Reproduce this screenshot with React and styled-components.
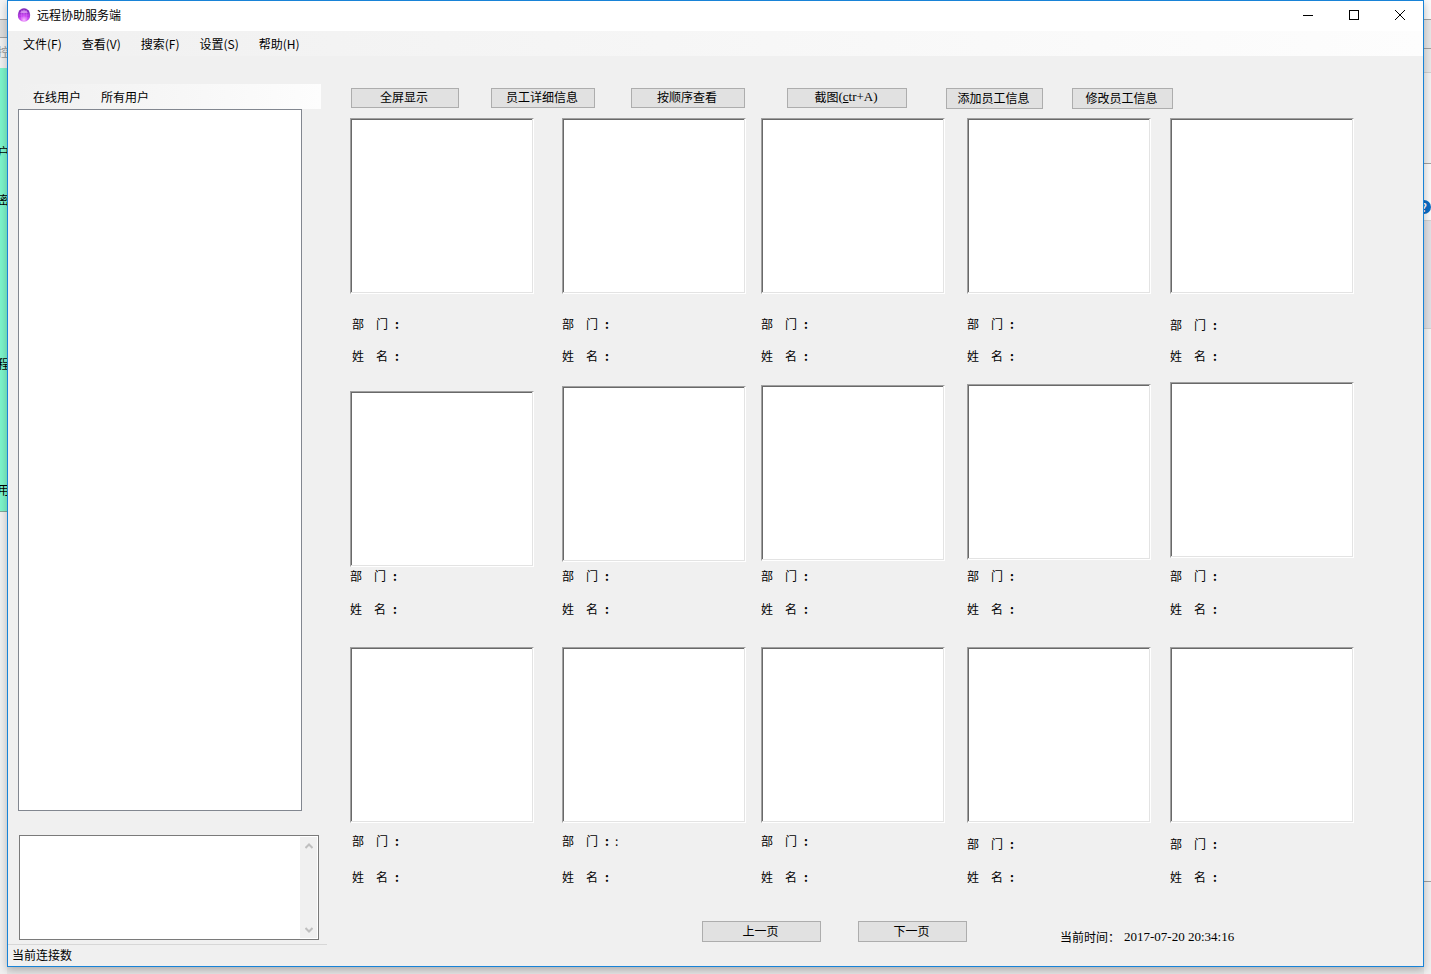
import React from "react";
import styled, { createGlobalStyle } from "styled-components";

const GlobalStyle = createGlobalStyle`
  * {
    box-sizing: border-box;
  }
  body {
    margin: 0;
    font-family: "Noto Sans CJK SC", sans-serif;
    font-size: 12px;
    line-height: 16px;
    color: #000;
  }
  button {
    font: inherit;
    color: inherit;
    padding: 0;
  }
`;

const Desktop = styled.div`
  display: flex;
  min-height: 100vh;
  background: #e6e6e6;
`;

const Strip = styled.div`
  flex: 0 0 7px;
  width: 7px;
  overflow: hidden;
  display: flex;
  flex-direction: column;
`;

const Slice = styled.div`
  height: ${({ height }) => height}px;
  flex: ${({ height }) => (height ? "none" : "1")};
  background: ${({ bg }) => bg};
  border-bottom: ${({ line }) => (line ? `1px solid ${line}` : "none")};
  color: ${({ color }) => color || "#000"};
  display: flex;
  align-items: flex-end;
  justify-content: center;
  white-space: nowrap;
`;

const HelpDot = styled.span`
  flex: none;
  width: 14px;
  height: 14px;
  margin-right: 7px;
  margin-bottom: 6px;
  border-radius: 50%;
  background: #0a6cc4;
  color: #fff;
  font-size: 11px;
  font-weight: 700;
  line-height: 14px;
  text-align: center;
`;

const Window = styled.div`
  position: relative;
  flex: 1;
  min-width: 0;
  margin-bottom: 7px;
  display: flex;
  flex-direction: column;
  background: #f0f0f0;
  border: 1px solid #1883d7;
  box-shadow: 0 3px 8px rgba(0, 0, 0, 0.25);
`;

const TitleBar = styled.header`
  height: 30px;
  display: flex;
  align-items: center;
  background: #fff;
  padding-left: 9px;
  padding-bottom: 2px;
`;

const Title = styled.h1`
  flex: 1;
  margin: 0 0 0 6px;
  font-size: 12px;
  font-weight: 400;
`;

const WindowButton = styled.button`
  width: 46px;
  height: 28px;
  border: none;
  background: none;
  display: flex;
  align-items: center;
  justify-content: center;
`;

const MenuBar = styled.nav`
  height: 25px;
  display: flex;
  align-items: center;
  gap: 20px;
  padding-left: 15px;
  background: linear-gradient(to right, #f0f0f0, #fdfdfd);
`;

const FlatButton = styled.button`
  border: none;
  background: none;
`;

const Body = styled.div`
  flex: 1;
  display: flex;
`;

const Side = styled.aside`
  flex: none;
  width: 319px;
  display: flex;
  flex-direction: column;
  padding-top: 28px;
`;

const Tabs = styled.div`
  height: 25px;
  margin: 0 6px 0 10px;
  padding-left: 15px;
  display: flex;
  align-items: center;
  gap: 20px;
  background: linear-gradient(to right, #f0f0f0, #fdfdfd);
`;

const UserList = styled.ul`
  flex: 1;
  margin: 0 25px 0 10px;
  padding: 0;
  list-style: none;
  background: #fff;
  border: 1px solid #828790;
`;

const LogBox = styled.div`
  height: 105px;
  margin: 24px 8px 4px 11px;
  padding: 1px;
  display: flex;
  background: #fff;
  border: 1px solid #7a7a7a;
`;

const LogText = styled.textarea`
  flex: 1;
  border: none;
  outline: none;
  resize: none;
  overflow: hidden;
  font: inherit;
`;

const ScrollBar = styled.div`
  width: 17px;
  display: flex;
  flex-direction: column;
  justify-content: space-between;
  background: #f0f0f0;
`;

const ScrollButton = styled.button`
  height: 17px;
  border: none;
  background: none;
  display: flex;
  align-items: center;
  justify-content: center;
`;

const StatusBar = styled.footer`
  height: 22px;
  padding: 2px 4px;
  border-top: 1px solid #d7d7d7;
`;

const Main = styled.main`
  flex: 1;
  min-width: 0;
  padding: 32px 69px 21px 23px;
`;

const Toolbar = styled.div`
  display: flex;
  height: 20px;
  margin-bottom: 10px;
  padding-left: 1px;
`;

const PushButton = styled.button`
  width: ${({ width }) => width}px;
  height: ${({ tall }) => (tall ? 21 : 20)}px;
  margin-right: ${({ after }) => after || 0}px;
  padding: 0 2px 2px 0;
  border: 1px solid #adadad;
  background: #e1e1e1;
  display: flex;
  align-items: center;
  justify-content: center;
`;

const Latin = styled.span`
  font-family: "Liberation Serif", serif;
  font-size: 13px;
`;

const Screens = styled.div`
  display: flex;
`;

const Column = styled.div`
  flex: 1;
  min-width: 0;
  margin-right: ${({ after }) => after}px;
`;

const Cell = styled.section`
  margin-top: ${({ above }) => above}px;
`;

const Screen = styled.div`
  height: 176px;
  background: #fff;
  border: 1px solid;
  border-color: #a0a0a0 #fff #fff #a0a0a0;
  box-shadow: inset -1px -1px 0 #e3e3e3, inset 1px 1px 0 #696969;
`;

const Field = styled.p`
  margin: ${({ above }) => above}px 0 0;
  padding-left: ${({ indent }) => indent || 0}px;
  white-space: pre;
`;

const Colon = styled.b`
  margin-left: 7px;
`;

const Pager = styled.div`
  display: flex;
  align-items: flex-start;
  margin-top: 36px;
  padding-left: 352px;
`;

const Clock = styled.p`
  margin: 8px 0 0 93px;
  display: flex;
  gap: 4px;
  white-space: nowrap;
`;

const menus = ["文件(F)", "查看(V)", "搜索(F)", "设置(S)", "帮助(H)"];

const tools = [
  { label: "全屏显示", width: 108, after: 32 },
  { label: "员工详细信息", width: 104, after: 36 },
  { label: "按顺序查看", width: 114, after: 42 },
  {
    label: (
      <>
        截图
        <Latin>
          (<u>c</u>tr+A)
        </Latin>
      </>
    ),
    width: 120,
    after: 39,
  },
  { label: "添加员工信息", width: 97, after: 29, tall: true },
  { label: "修改员工信息", width: 101, tall: true },
];

// above: space over the screen, dept / name: space over each label
const columns = [
  {
    after: 28,
    cells: [
      { above: 0, dept: 22, name: 16, indent: 2 },
      { above: 27, dept: 1, name: 17 },
      { above: 30, dept: 10, name: 20, indent: 2 },
    ],
  },
  {
    after: 15,
    cells: [
      { above: 0, dept: 22, name: 16 },
      { above: 22, dept: 6, name: 17 },
      { above: 30, dept: 10, name: 20, extra: "\u2002:" },
    ],
  },
  {
    after: 22,
    cells: [
      { above: 0, dept: 22, name: 16 },
      { above: 21, dept: 7, name: 17 },
      { above: 30, dept: 10, name: 20 },
    ],
  },
  {
    after: 19,
    cells: [
      { above: 0, dept: 22, name: 16 },
      { above: 20, dept: 8, name: 17 },
      { above: 30, dept: 13, name: 17 },
    ],
  },
  {
    after: 0,
    cells: [
      { above: 0, dept: 23, name: 15 },
      { above: 18, dept: 10, name: 17 },
      { above: 30, dept: 13, name: 17 },
    ],
  },
];

function AppIcon() {
  return (
    <svg width="14" height="14" viewBox="0 0 14 14">
      <defs>
        <radialGradient id="ball" cx="50%" cy="85%" r="80%">
          <stop offset="0" stopColor="#fbc4ff" />
          <stop offset="0.4" stopColor="#c63df0" />
          <stop offset="1" stopColor="#7a24b4" />
        </radialGradient>
      </defs>
      <ellipse cx="7" cy="7" rx="6.2" ry="6.8" fill="url(#ball)" />
      <path d="M3 4.5Q7 0 11 4.5Q7 6 3 4.5Z" fill="#e7b4f7" opacity="0.7" />
      <path
        d="M1 7H13M2 10H12M4.5 1.5V12.5M7 1V13M9.5 1.5V12.5"
        stroke="#e58cff"
        strokeWidth="0.5"
        opacity="0.6"
      />
    </svg>
  );
}

function App() {
  return (
    <>
      <GlobalStyle />
      <Desktop>
        <Strip aria-hidden="true">
          <Slice height={20} bg="#f4f4f4" line="#a0a0a0" />
          <Slice height={18} bg="#dcdcdc" line="#a0a0a0" />
          <Slice height={22} bg="#f0f0f0" color="#999">
            控
          </Slice>
          <Slice height={8} bg="#f0f0f0" />
          <Slice height={92} bg="#7cf4ca">户</Slice>
          <Slice height={48} bg="#7cf4ca">密</Slice>
          <Slice height={164} bg="#7cf4ca">程</Slice>
          <Slice height={126} bg="#7cf4ca">用</Slice>
          <Slice height={14} bg="#7cf4ca" line="#7fa898" />
          <Slice bg="#f0f0f0" />
        </Strip>
        <Window>
          <TitleBar>
            <AppIcon />
            <Title>远程协助服务端</Title>
            <WindowButton aria-label="最小化">
              <svg width="10" height="10" shapeRendering="crispEdges">
                <path d="M0 5.5H10" stroke="#000" />
              </svg>
            </WindowButton>
            <WindowButton aria-label="最大化">
              <svg width="10" height="10" shapeRendering="crispEdges">
                <rect x="0.5" y="0.5" width="9" height="9" fill="none" stroke="#000" />
              </svg>
            </WindowButton>
            <WindowButton aria-label="关闭">
              <svg width="10" height="10">
                <path d="M0 0L10 10M10 0L0 10" stroke="#000" />
              </svg>
            </WindowButton>
          </TitleBar>
          <MenuBar>
            {menus.map((menu) => (
              <FlatButton key={menu}>{menu}</FlatButton>
            ))}
          </MenuBar>
          <Body>
            <Side>
              <Tabs>
                <FlatButton>在线用户</FlatButton>
                <FlatButton>所有用户</FlatButton>
              </Tabs>
              <UserList />
              <LogBox>
                <LogText aria-label="日志" />
                <ScrollBar>
                  <ScrollButton aria-label="向上">
                    <svg width="8" height="6">
                      <path d="M0.5 5L4 1.5L7.5 5" fill="none" stroke="#bfbfbf" strokeWidth="2" />
                    </svg>
                  </ScrollButton>
                  <ScrollButton aria-label="向下">
                    <svg width="8" height="6">
                      <path d="M0.5 1L4 4.5L7.5 1" fill="none" stroke="#bfbfbf" strokeWidth="2" />
                    </svg>
                  </ScrollButton>
                </ScrollBar>
              </LogBox>
              <StatusBar>当前连接数</StatusBar>
            </Side>
            <Main>
              <Toolbar>
                {tools.map((tool, i) => (
                  <PushButton key={i} width={tool.width} after={tool.after} tall={tool.tall}>
                    {tool.label}
                  </PushButton>
                ))}
              </Toolbar>
              <Screens>
                {columns.map((column, i) => (
                  <Column key={i} after={column.after}>
                    {column.cells.map((cell, j) => (
                      <Cell key={j} above={cell.above}>
                        <Screen />
                        <Field above={cell.dept} indent={cell.indent}>
                          {"部\u3000门"}
                          <Colon>:</Colon>
                          {cell.extra}
                        </Field>
                        <Field above={cell.name} indent={cell.indent}>
                          {"姓\u3000名"}
                          <Colon>:</Colon>
                        </Field>
                      </Cell>
                    ))}
                  </Column>
                ))}
              </Screens>
              <Pager>
                <PushButton width={119} after={37} tall="true">
                  上一页
                </PushButton>
                <PushButton width={109} tall="true">
                  下一页
                </PushButton>
                <Clock>
                  当前时间：<Latin>2017-07-20 20:34:16</Latin>
                </Clock>
              </Pager>
            </Main>
          </Body>
        </Window>
        <Strip aria-hidden="true">
          <Slice height={20} bg="#fafafa" line="#a0a0a0" />
          <Slice height={29} bg="#e6e6e6" line="#a0a0a0" />
          <Slice height={24} bg="#e8e8e8" line="#d0d0d0" />
          <Slice height={91} bg="#f2f2f2" line="#a0a0a0" />
          <Slice height={57} bg="#fafafa" line="#d0d0d0">
            <HelpDot>?</HelpDot>
          </Slice>
          <Slice height={108} bg="#e0e0e4" line="#d0d0d0" />
          <Slice height={553} bg="#f4f4f4" line="#a0a0a0" />
          <Slice bg="#f0f0f0" />
        </Strip>
      </Desktop>
    </>
  );
}

export default App;
